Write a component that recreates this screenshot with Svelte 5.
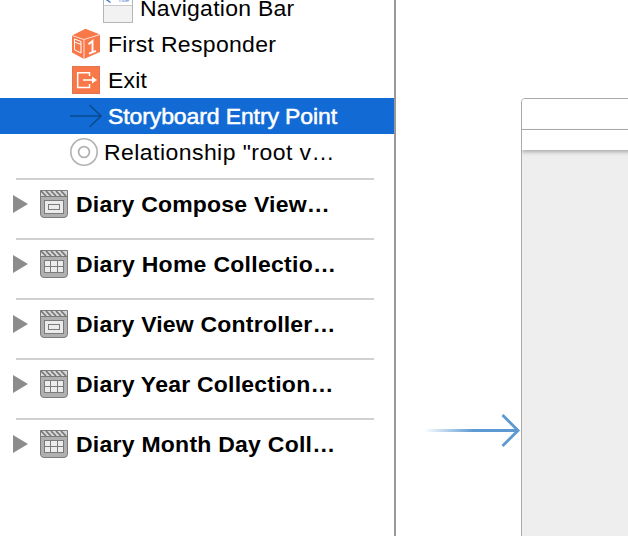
<script>
  const items = [
    { icon: 'nav', label: 'Navigation Bar', indent: 102, gap: 6, track: 0.25 },
    { icon: 'cube', label: 'First Responder', indent: 70, gap: 6, track: 0.3 },
    { icon: 'exit', label: 'Exit', indent: 70, gap: 6, track: 0.2 },
    { icon: 'arrow', label: 'Storyboard Entry Point', indent: 70, gap: 6, track: -0.1, selected: true },
    { icon: 'ring', label: 'Relationship "root v…', indent: 69, gap: 3, track: 0.43 }
  ];
  const scenes = [
    { label: 'Diary Compose View…', grid: false, track: 0.2 },
    { label: 'Diary Home Collectio…', grid: true, track: 0.28 },
    { label: 'Diary View Controller…', grid: false, track: 0.2 },
    { label: 'Diary Year Collection…', grid: true, track: 0.22 },
    { label: 'Diary Month Day Coll…', grid: true, track: 0.24 }
  ];
</script>

<div class="window">
  <aside>
    <div class="items">
      {#each items as item}
        <div class="row" class:selected={item.selected} style="padding-left:{item.indent}px;gap:{item.gap}px">
          <svg width="32" height="36" viewBox="0 0 32 36" fill="none">
            {#if item.icon === 'nav'}
              <rect x="1.5" y="2.5" width="29" height="30" fill="#f2f2f2" stroke="#b5b5b5" />
              <path d="M2 3h28v12H2z" fill="#fff" />
              <path d="M2 15.5h28" stroke="#cacaca" />
              <path d="M8.500 7L5 10l3.500 2.500" stroke="#4d78c8" stroke-width="1.500" />
              <text x="16" y="12" font-size="6" fill="#5a82d0">Title</text>
            {:else if item.icon === 'cube'}
              <path d="M2 9.500L15.500 2.800 30 8.500V26L14 33 2 26.500z" fill="#f9784a" />
              <path d="M2 9.500L14 13.500 30 8.500M14 13.500V33" stroke="#ffe2d5" stroke-width="1" />
              <path d="M4.500 13l6.500 2.500v11.500l-6.500-3.200zM4.500 16l6.500 2.500" stroke="#fff" stroke-width="1" />
              <path d="M18.500 18.300l4-3.200V26.500M19 27.600l7-2.800" stroke="#fff" stroke-width="1.900" />
            {:else if item.icon === 'exit'}
              <rect x="2.500" y="4.500" width="27" height="27" fill="#f9784a" stroke="#e17550" />
              <path d="M19.500 14v-3.300H7.700v14.700h11.800V22M13 18h12" stroke="#fff" stroke-width="1.500" />
              <path d="M22 14.500l5 3.500-5 3.500z" fill="#fff" />
            {:else if item.icon === 'arrow'}
              <path d="M0 18h31M19.500 7L31 18 19.500 29" stroke="#094b91" stroke-width="1.600" />
            {:else}
              <circle cx="15" cy="18" r="13.200" stroke="#b2b2b2" stroke-width="1.600" />
              <circle cx="15" cy="18" r="5.400" stroke="#b2b2b2" stroke-width="1.800" />
            {/if}
          </svg>
          <span style="letter-spacing:{item.track}px">{item.label}</span>
        </div>
      {/each}
    </div>

    <div class="scenes">
      {#each scenes as scene}
        <div class="scene">
          <svg class="triangle" width="15" height="18" viewBox="0 0 15 18"><path d="M0 0l15 9-15 9z" fill="#8c8c8c" /></svg>
          <svg class="clapper" width="28" height="28" viewBox="0 0 28 28" fill="none">
            <path d="M.500.500h27V24q0 3.500-3.500 3.500H4Q.500 27.500.500 24z" fill="#b0b0b0" stroke="#7c7c7c" />
            <path d="M1 1h26v5H1z" fill="#d7d7d7" />
            <path d="M1 1l5 5M6 1l5 5M11 1l5 5M16 1l5 5M21 1l5 5" stroke="#737373" stroke-width="1.600" />
            <path d="M.500 6.500h27" stroke="#777" />
            {#if scene.grid}
              <rect x="4.500" y="10.500" width="19" height="12" fill="#ececec" stroke="#7b7b7b" />
              <path d="M4.500 16.500h19M10.500 10.500v12M17.500 10.500v12" stroke="#7b7b7b" />
            {:else}
              <rect x="4.500" y="10.500" width="19" height="13" fill="#ececec" stroke="#7b7b7b" />
              <rect x="8.500" y="14.500" width="11" height="5" stroke="#7b7b7b" />
            {/if}
          </svg>
          <span style="letter-spacing:{scene.track}px">{scene.label}</span>
        </div>
      {/each}
    </div>
  </aside>

  <main>
    <svg class="entry" width="97" height="36" viewBox="0 0 97 36" fill="none">
      <defs>
        <linearGradient id="fade" gradientUnits="userSpaceOnUse" x1="0" x2="50" y1="0" y2="0">
          <stop stop-color="#5d99d2" stop-opacity="0" />
          <stop offset="1" stop-color="#5d99d2" />
        </linearGradient>
      </defs>
      <path d="M0 16h94v3H0z" fill="url(#fade)" />
      <path d="M78.500 2L94 17.500 78.500 33" stroke="#5d99d2" stroke-width="2.900" />
    </svg>
    <div class="controller">
      <div class="status"></div>
      <div class="navbar"></div>
    </div>
  </main>
</div>

<style>
  :global(body) { overflow: hidden; }
  .window {
    display: flex;
    width: 628px;
    height: 536px;
    overflow: hidden;
    background: #fff;
    color: #000;
    font: 22px/36px "Liberation Sans", Arial, sans-serif;
    white-space: nowrap;
  }
  aside {
    width: 394px;
    flex: none;
    border-right: 2px solid #999;
  }
  .items { margin-top: -10px; }
  .row { display: flex; height: 36px; align-items: center; }
  .row svg { flex: none; }
  span { transform: translateY(1px) scaleX(1.045); transform-origin: left center; }
  .selected { background: #126bd5; color: #fff; -webkit-text-stroke: 0.5px #fff; }
  .scenes { margin: 8px 20px 0 16px; }
  .scene {
    display: flex;
    align-items: center;
    height: 60px;
    padding-bottom: 10px;
    box-sizing: border-box;
    border-top: 2px solid #d1d1d1;
    font-weight: 700;
  }
  .triangle { margin-left: -3px; flex: none; }
  .clapper { margin: 0 8px 0 12px; flex: none; }
  main { display: flex; flex: 1; min-width: 0; }
  .entry { flex: none; margin: 413px 0 0 28px; }
  .controller {
    flex: none;
    width: 200px;
    height: 460px;
    margin-top: 98px;
    background: #eee;
    border: 1px solid #aaa;
    border-radius: 4px 0 0 0;
    overflow: hidden;
  }
  .status { height: 30px; background: #fff; border-bottom: 1px solid #aaa; }
  .navbar { height: 20px; background: #fff; box-shadow: 0 2px 4px #aaa; }
</style>
